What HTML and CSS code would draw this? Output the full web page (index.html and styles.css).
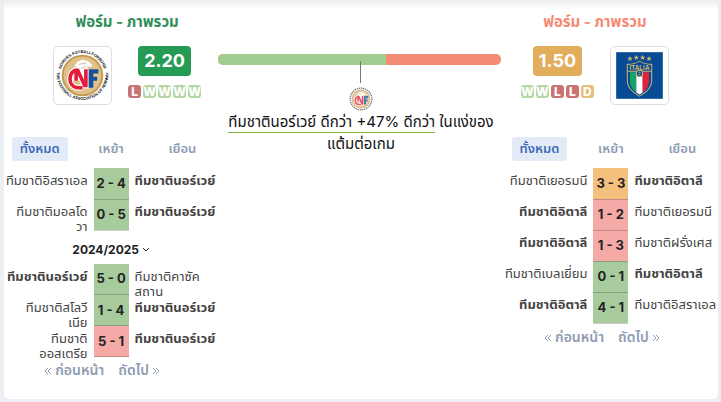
FILE: index.html
```html
<!DOCTYPE html>
<html lang="th">

<head>
    <meta charset="UTF-8">
    <meta name="viewport" content="width=device-width, initial-scale=1.0">
    <title>ฟอร์ม - ภาพรวม</title>
    <link rel="stylesheet" href="styles.css">
</head>

<body>
    <main class="card">
        <section class="side home">
            <div class="team">
                <h2>ฟอร์ม - ภาพรวม</h2>
                <div class="summary">
                    <div class="crest">
                        <svg viewBox="0 0 500 500" role="img" aria-label="NFF">
                            <defs>
                                <path id="arcTop" d="M58 340 A212 212 0 1 1 442 340" />
                                <path id="arcBottom" d="M8 205 A244 244 0 1 0 492 205" />
                            </defs>
                            <g id="nff">
                                <circle cx="250" cy="250" r="196" fill="#c39a52" />
                                <circle cx="250" cy="250" r="178" fill="#e0c18a" />
                                <path d="M172 160 L205 120 L250 100 L300 115 L345 150 L330 168 L290 165 L310 200 L315 260 H200 V170 Z" fill="#fff" />
                                <path d="M215 145 L290 130 M235 185 L280 165" stroke="#cfb890" stroke-width="9" fill="none" />
                                <path d="M200 200 C110 200 105 365 210 365 H250 M190 300 V200 H205 L270 345 H282 V190" fill="none" stroke="#fff" stroke-width="54" />
                                <path d="M200 200 C110 200 105 365 210 365 H250 M190 300 V200 H205 L270 345 H282 V190" fill="none" stroke="#e31b3c" stroke-width="34" />
                                <path d="M308 190 H400 V232 H352 V262 H388 V300 H352 V366 H308 Z" fill="#174f9c" />
                            </g>
                            <text class="ring"><textPath href="#arcTop" startOffset="50%">NORGES FOTBALLFORBUND</textPath></text>
                            <text class="ring"><textPath href="#arcBottom" startOffset="50%">THE FOOTBALL ASSOCIATION OF NORWAY</textPath></text>
                        </svg>
                    </div>
                    <div class="rating">
                        <strong class="points good">2.20</strong>
                        <div class="form">
                            <span class="l">L</span><span class="w">W</span><span class="w">W</span><span class="w">W</span><span class="w">W</span>
                        </div>
                    </div>
                </div>
            </div>
            <nav class="tabs">
                <button class="active">ทั้งหมด</button>
                <button>เหย้า</button>
                <button>เยือน</button>
            </nav>
            <table class="matches">
                <tr>
                    <td><div>ทีมชาติอิสราเอล</div></td>
                    <td class="score win">2 - 4</td>
                    <td><div><b>ทีมชาตินอร์เวย์</b></div></td>
                </tr>
                <tr>
                    <td><div>ทีมชาติมอลโด<br>วา</div></td>
                    <td class="score win">0 - 5</td>
                    <td><div><b>ทีมชาตินอร์เวย์</b></div></td>
                </tr>
            </table>
            <button class="season">2024/2025
                <svg viewBox="0 0 8 8"><path d="M1 2 L4 5 L7 2" /></svg>
            </button>
            <table class="matches">
                <tr>
                    <td><div><b>ทีมชาตินอร์เวย์</b></div></td>
                    <td class="score win">5 - 0</td>
                    <td><div>ทีมชาติคาซัค<br>สถาน</div></td>
                </tr>
                <tr>
                    <td><div>ทีมชาติสโลวี<br>เนีย</div></td>
                    <td class="score win">1 - 4</td>
                    <td><div><b>ทีมชาตินอร์เวย์</b></div></td>
                </tr>
                <tr>
                    <td><div>ทีมชาติ<br>ออสเตรีย</div></td>
                    <td class="score loss">5 - 1</td>
                    <td><div><b>ทีมชาตินอร์เวย์</b></div></td>
                </tr>
            </table>
            <nav class="pager">
                <a href="#"><svg viewBox="0 0 8 8"><path d="M4 1 L1 4 L4 7 M7 1 L4 4 L7 7" /></svg> ก่อนหน้า</a>
                <a href="#">ถัดไป <svg viewBox="0 0 8 8"><path d="M1 1 L4 4 L1 7 M4 1 L7 4 L4 7" /></svg></a>
            </nav>
        </section>

        <section class="compare">
            <div class="bar"><span style="width: 59.4%"></span></div>
            <div class="pointer"></div>
            <svg class="mini" viewBox="0 0 500 500">
                <circle class="dashes" cx="250" cy="250" r="226" />
                <use href="#nff" />
            </svg>
            <p><u>ทีมชาตินอร์เวย์ ดีกว่า +47% ดีกว่า</u> ในแง่ของ<br>แต้มต่อเกม</p>
        </section>

        <section class="side away">
            <div class="team">
                <h2>ฟอร์ม - ภาพรวม</h2>
                <div class="summary">
                    <div class="rating">
                        <strong class="points fair">1.50</strong>
                        <div class="form">
                            <span class="w">W</span><span class="w">W</span><span class="l">L</span><span class="l">L</span><span class="d">D</span>
                        </div>
                    </div>
                    <div class="crest">
                        <svg viewBox="0 0 50 50" role="img" aria-label="Italia">
                            <defs>
                                <path id="star" d="M0 -2.500 L0.700 -0.800 L2.500 -0.700 L1.100 0.500 L1.600 2.300 L0 1.300 L-1.600 2.300 L-1.100 0.500 L-2.500 -0.700 L-0.700 -0.800 Z" fill="#d3b56a" />
                            </defs>
                            <rect x="3" y="3" width="44" height="44" fill="#064b93" />
                            <use href="#star" x="16" y="9" />
                            <use href="#star" x="22" y="8" />
                            <use href="#star" x="28" y="8" />
                            <use href="#star" x="34" y="9" />
                            <path d="M13 14 Q20 14 25 11 Q30 14 37 14 V30 Q37 39 25 45 Q13 39 13 30 Z" fill="#c9b073" />
                            <path d="M14 15 Q20 15 25 12 Q30 15 36 15 V30 Q36 38 25 44 Q14 38 14 30 Z" fill="#064b93" />
                            <path d="M16 22 H22 V41 Q16 37 16 30 Z" fill="#16a567" />
                            <path d="M22 22 H28 V41 L25 43 L22 41 Z" fill="#fff" />
                            <path d="M28 22 H34 V30 Q34 37 28 41 Z" fill="#e5203a" />
                            <path d="M14 21 H36" stroke="#c9b073" />
                            <circle cx="25" cy="23" r="3" fill="#064b93" stroke="#c9b073" />
                            <path d="M24 22 H26 M24 24 H26" stroke="#c9b073" />
                            <text class="italia" x="25" y="20">ITALIA</text>
                        </svg>
                    </div>
                </div>
            </div>
            <nav class="tabs">
                <button class="active">ทั้งหมด</button>
                <button>เหย้า</button>
                <button>เยือน</button>
            </nav>
            <table class="matches">
                <tr>
                    <td><div>ทีมชาติเยอรมนี</div></td>
                    <td class="score draw">3 - 3</td>
                    <td><div><b>ทีมชาติอิตาลี</b></div></td>
                </tr>
                <tr>
                    <td><div><b>ทีมชาติอิตาลี</b></div></td>
                    <td class="score loss">1 - 2</td>
                    <td><div>ทีมชาติเยอรมนี</div></td>
                </tr>
                <tr>
                    <td><div><b>ทีมชาติอิตาลี</b></div></td>
                    <td class="score loss">1 - 3</td>
                    <td><div>ทีมชาติฝรั่งเศส</div></td>
                </tr>
                <tr>
                    <td><div>ทีมชาติเบลเยี่ยม</div></td>
                    <td class="score win">0 - 1</td>
                    <td><div><b>ทีมชาติอิตาลี</b></div></td>
                </tr>
                <tr>
                    <td><div><b>ทีมชาติอิตาลี</b></div></td>
                    <td class="score win">4 - 1</td>
                    <td><div>ทีมชาติอิสราเอล</div></td>
                </tr>
            </table>
            <nav class="pager">
                <a href="#"><svg viewBox="0 0 8 8"><path d="M4 1 L1 4 L4 7 M7 1 L4 4 L7 7" /></svg> ก่อนหน้า</a>
                <a href="#">ถัดไป <svg viewBox="0 0 8 8"><path d="M1 1 L4 4 L1 7 M4 1 L7 4 L4 7" /></svg></a>
            </nav>
        </section>
    </main>
</body>

</html>
```
FILE: styles.css
```css
* {
    box-sizing: border-box;
}

body {
    margin: 0;
    padding: 0 3px 3px 4px;
    background: #ebeff4;
    font-family: Inter, "Noto Sans Thai", "Noto Sans", sans-serif;
    color: #222;
}

button {
    border: 0;
    padding: 0;
    background: none;
    font-family: inherit;
    cursor: pointer;
}

.card {
    display: grid;
    grid-template-columns: 3fr 4fr 3fr;
    padding-bottom: 19px;
    border-radius: 0 0 5px 5px;
    background: linear-gradient(#eceeee, #fff 9px);
}

.team {
    height: 137px;
    padding-top: 12px;
}

.home .team {
    padding-left: 32px;
}

.away .team {
    padding-right: 32px;
}

h2 {
    margin: 0 0 14px;
    font-size: 15px;
    line-height: 20px;
    font-weight: 700;
    text-align: center;
}

.home h2 {
    color: #2f8f5b;
}

.away h2 {
    color: #f58b75;
}

.summary {
    display: flex;
    justify-content: center;
    gap: 16px;
}

.crest {
    width: 59px;
    height: 59px;
    padding: 2px;
    border: 1px solid #dcdce6;
    border-radius: 5px;
    background: #fff;
}

.crest svg {
    display: block;
    width: 100%;
}

.ring {
    font: bold 38px "Liberation Sans", sans-serif;
    text-anchor: middle;
    fill: #111;
}

.italia {
    font: bold 6px "Liberation Sans", sans-serif;
    text-anchor: middle;
    fill: #d3b56a;
}

.rating {
    display: flex;
    flex-direction: column;
    align-items: center;
    gap: 9px;
}

.points {
    padding: 0 6px;
    border-radius: 4px;
    font-size: 18px;
    line-height: 30px;
    color: #fff;
}

.good {
    background: #259b55;
}

.fair {
    background: #e3ae5c;
}

.form {
    display: flex;
    gap: 2px;
}

.form span {
    display: flex;
    justify-content: center;
    width: 13px;
    height: 13px;
    border-radius: 3px;
    font-size: 12px;
    line-height: 13px;
    font-weight: 800;
    color: #fff;
}

.form .w {
    background: #b3d8a5;
}

.form .l {
    background: #c97373;
}

.form .d {
    background: #e6bd7c;
}

.tabs {
    display: grid;
    grid-template-columns: 1fr 1fr 1fr;
    justify-items: center;
}

.tabs button {
    height: 24px;
    padding: 0 8px;
    border-radius: 3px;
    font-size: 13px;
    font-weight: 600;
    color: #8e9cb3;
}

.tabs .active {
    background: #e3ebf6;
    color: #3e6bb8;
}

.matches {
    width: 100%;
    table-layout: fixed;
    border-collapse: collapse;
}

.tabs + .matches {
    margin-top: 7px;
}

.matches td {
    height: 31px;
    padding: 0 0 0 6px;
    vertical-align: top;
    font-size: 13px;
    line-height: 15px;
    white-space: nowrap;
    color: #444;
}

.matches td:first-child {
    padding: 0 6px 0 0;
    text-align: right;
}

/* a second line may hang under the row */
.matches div {
    height: 26px;
    padding-top: 5px;
}

.matches .score {
    width: 35px;
    padding: 0;
    border-bottom: 1px solid rgba(0, 0, 0, 0.2);
    vertical-align: middle;
    text-align: center;
    font-size: 13px;
    font-weight: 700;
    color: #222;
}

.matches .win {
    background: #a8cb9e;
}

.matches .loss {
    background: #f5aaa8;
}

.matches .draw {
    background: #f4c07d;
}

.season {
    display: block;
    width: 100%;
    height: 33px;
    padding-top: 5px;
    font-size: 12px;
    font-weight: 700;
    color: #222;
}

.season svg,
.pager svg {
    width: 8px;
    height: 8px;
    fill: none;
    stroke: currentColor;
}

.pager {
    display: flex;
    justify-content: center;
    gap: 14px;
    padding: 3px 18px 0 0;
    line-height: 20px;
}

.pager a {
    font-size: 14px;
    font-weight: 600;
    color: #8e9cb3;
    text-decoration: none;
}

.compare {
    display: flex;
    flex-direction: column;
    align-items: center;
    padding-top: 54px;
}

.bar {
    align-self: flex-start;
    width: 99%;
    height: 11px;
    border-radius: 5px;
    overflow: hidden;
    background: #f58b75;
}

.bar span {
    display: block;
    height: 100%;
    background: #a2cd90;
}

.pointer {
    width: 1px;
    height: 22px;
    margin: -4px 0 4px;
    background: #777;
    z-index: 1;
}

.mini {
    width: 24px;
    height: 24px;
    opacity: 0.75;
}

.dashes {
    fill: none;
    stroke: #444;
    stroke-width: 24;
    stroke-dasharray: 30 14;
}

.compare p {
    margin: 0;
    font-size: 15px;
    line-height: 22px;
    text-align: center;
    white-space: nowrap;
    color: #111;
}

.compare u {
    padding-bottom: 1px;
    border-bottom: 1px solid #75b843;
    text-decoration: none;
}
```
